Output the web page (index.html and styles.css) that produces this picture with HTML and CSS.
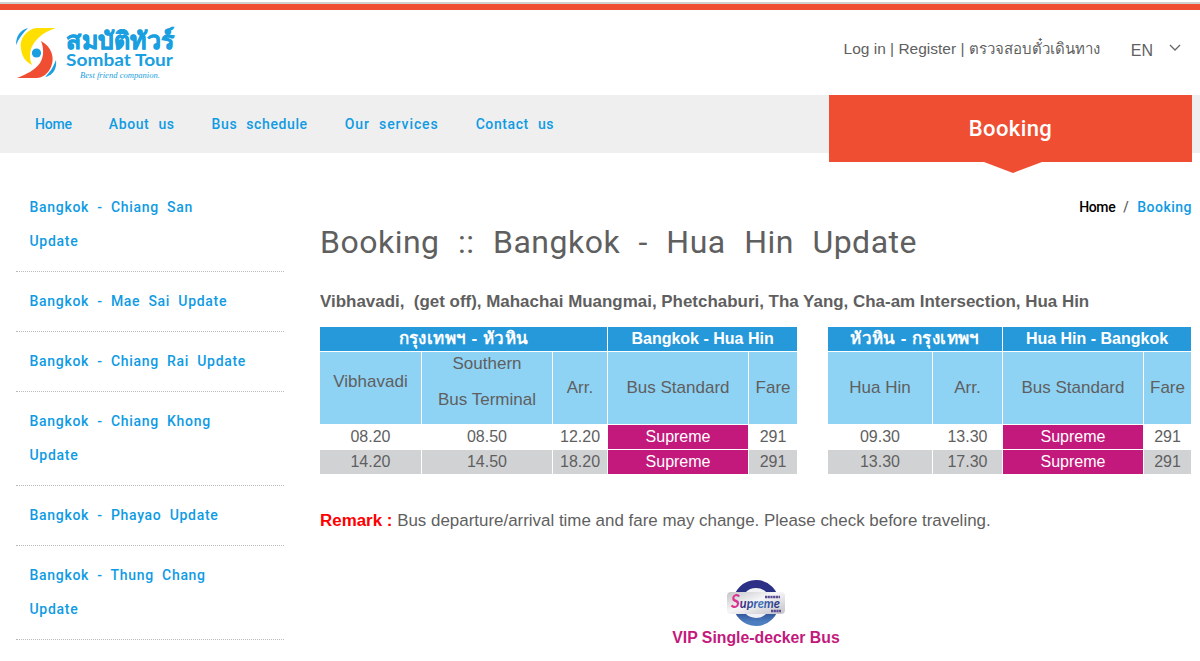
FILE: index.html
```
<!DOCTYPE html>
<html lang="en">

<head>
    <meta charset="UTF-8">
    <meta name="viewport" content="width=device-width, initial-scale=1.0">
    <title>Booking :: Bangkok - Hua Hin Update</title>
    <link rel="stylesheet" href="styles.css">
</head>

<body>

    <header class="header">
        <a class="logo" href="#">
            <svg width="164" height="58" viewBox="0 0 164 58">
                <path d="M1 18 C1 9 5 3 13 1 C8 6 4 11 1 18Z" fill="#1a9fe0" />
                <path d="M41 1 H21 C11 3 4 12 6 22 C7 30 11 35 17 38 C14 31 14 23 19 16 C24 9 31 4 41 1Z" fill="#ffdf00" />
                <path d="M26 14 C37 20 40 31 36 40 C33 47 27 51 22 51 H2 C12 47 20 43 25 36 C29 30 29 21 26 14Z" fill="#f04e33" />
                <path d="M41 33 C42 41 39 48 30 50 C35 45 38 41 41 33Z" fill="#1a9fe0" />
                <circle cx="21.500" cy="26" r="4.600" fill="#1a9fe0" />
                <text class="logo-thai" x="51" y="22" textLength="108" lengthAdjust="spacingAndGlyphs">สมบัติทัวร์</text>
                <text class="logo-name" x="51" y="39" textLength="107" lengthAdjust="spacingAndGlyphs">Sombat Tour</text>
                <text class="logo-slogan" x="65" y="51" textLength="80" lengthAdjust="spacingAndGlyphs">Best friend companion.</text>
            </svg>
        </a>
        <div class="account">
            <a href="#">Log in</a> | <a href="#">Register</a> | <a class="check" href="#">ตรวจสอบตั๋วเดินทาง</a>
        </div>
        <div class="lang">
            <span>EN</span>
            <svg width="12" height="8" viewBox="0 0 12 8">
                <path d="M1 1 L6 6 L11 1" fill="none" stroke="#666" stroke-width="1.300" />
            </svg>
        </div>
    </header>

    <nav class="nav">
        <ul class="menu">
            <li class="home"><a href="#">Home</a></li>
            <li><a href="#">About us</a></li>
            <li><a href="#">Bus schedule</a></li>
            <li class="services"><a href="#">Our services</a></li>
            <li><a href="#">Contact us</a></li>
        </ul>
        <a class="booking-tab" href="#">Booking</a>
    </nav>

    <div class="page">
        <aside class="sidebar">
            <a href="#">Bangkok - Chiang San<br>Update</a>
            <a href="#">Bangkok - Mae Sai Update</a>
            <a href="#">Bangkok - Chiang Rai Update</a>
            <a href="#">Bangkok - Chiang Khong<br>Update</a>
            <a href="#">Bangkok - Phayao Update</a>
            <a href="#">Bangkok - Thung Chang<br>Update</a>
        </aside>

        <main class="content">
            <div class="breadcrumb"><a class="home" href="#">Home</a> / <a href="#">Booking</a></div>
            <h1>Booking :: Bangkok - Hua Hin Update</h1>
            <p class="route">Vibhavadi,&nbsp; (get off), Mahachai Muangmai, Phetchaburi, Tha Yang, Cha-am Intersection, Hua Hin</p>

            <div class="tables">
                <table class="outbound">
                    <colgroup>
                        <col class="w101"><col class="w130"><col class="w54"><col class="w140"><col class="w48">
                    </colgroup>
                    <tr class="title">
                        <th class="thai" colspan="3">กรุงเทพฯ - หัวหิน</th>
                        <th colspan="2">Bangkok - Hua Hin</th>
                    </tr>
                    <tr class="sub">
                        <td class="raised">Vibhavadi</td>
                        <td class="station">Southern<br>Bus Terminal</td>
                        <td>Arr.</td>
                        <td>Bus Standard</td>
                        <td>Fare</td>
                    </tr>
                    <tr>
                        <td>08.20</td>
                        <td>08.50</td>
                        <td>12.20</td>
                        <td class="supreme">Supreme</td>
                        <td>291</td>
                    </tr>
                    <tr class="alt">
                        <td>14.20</td>
                        <td>14.50</td>
                        <td>18.20</td>
                        <td class="supreme">Supreme</td>
                        <td>291</td>
                    </tr>
                </table>

                <table class="inbound">
                    <colgroup>
                        <col class="w104"><col class="w69"><col class="w140"><col class="w47">
                    </colgroup>
                    <tr class="title">
                        <th class="thai" colspan="2">หัวหิน - กรุงเทพฯ</th>
                        <th colspan="2">Hua Hin - Bangkok</th>
                    </tr>
                    <tr class="sub">
                        <td>Hua Hin</td>
                        <td>Arr.</td>
                        <td>Bus Standard</td>
                        <td>Fare</td>
                    </tr>
                    <tr>
                        <td>09.30</td>
                        <td>13.30</td>
                        <td class="supreme">Supreme</td>
                        <td>291</td>
                    </tr>
                    <tr class="alt">
                        <td>13.30</td>
                        <td>17.30</td>
                        <td class="supreme">Supreme</td>
                        <td>291</td>
                    </tr>
                </table>
            </div>

            <p class="remark"><strong>Remark :</strong> Bus departure/arrival time and fare may change. Please check before traveling.</p>

            <div class="bus">
                <svg width="60" height="48" viewBox="0 0 60 48">
                    <defs>
                        <linearGradient id="ring" x1="0" y1="0" x2="0" y2="1">
                            <stop offset="0" stop-color="#2d2f86" />
                            <stop offset="0.600" stop-color="#20367f" />
                            <stop offset="1" stop-color="#4d7fc0" />
                        </linearGradient>
                        <linearGradient id="plate" x1="0" y1="0" x2="1" y2="1">
                            <stop offset="0" stop-color="#c4c4c9" />
                            <stop offset="0.450" stop-color="#f6f6f8" />
                            <stop offset="1" stop-color="#c2c2c8" />
                        </linearGradient>
                        <linearGradient id="word" x1="0" y1="0" x2="1" y2="0">
                            <stop offset="0" stop-color="#e6358f" />
                            <stop offset="0.180" stop-color="#d0338f" />
                            <stop offset="0.240" stop-color="#34257c" />
                            <stop offset="0.600" stop-color="#3f73bb" />
                            <stop offset="1" stop-color="#2c2b75" />
                        </linearGradient>
                    </defs>
                    <circle cx="30" cy="23" r="19" fill="#f2f2f6" stroke="url(#ring)" stroke-width="8" />
                    <rect x="1" y="12" width="58" height="22" rx="4" fill="url(#plate)" />
                    <text class="badge-word" x="5" y="28" textLength="49" lengthAdjust="spacingAndGlyphs" fill="url(#word)"><tspan class="big">S</tspan>upreme</text>
                    <path d="M39 17 H54 M45 31 H55" stroke="#5a4a92" stroke-width="2.500" stroke-dasharray="2.200 0.500" />
                </svg>
                <span>VIP Single-decker Bus</span>
            </div>
        </main>
    </div>

</body>

</html>
```
FILE: styles.css
```
* {
    box-sizing: border-box;
}

body {
    margin: 0;
    height: 661px;
    overflow: hidden;
    background-color: #fff;
    color: #5f5f5f;
    font-family: "Liberation Sans", Arial, sans-serif;
    font-size: 16px;
    padding-top: 2px;
}

a {
    color: inherit;
    text-decoration: none;
}

.header {
    height: 93px;
    border-top: 2px solid #d0d0d0;
    display: flex;
    align-items: flex-start;
    padding: 0 19px 0 15px;
    background: linear-gradient(#f04e33 5.500px, #fff 6px);
}

.logo {
    margin-top: 23px;
}

.logo svg {
    display: block;
    overflow: visible;
}

.logo text {
    fill: #1a9fe0;
}

.logo .logo-thai {
    font-size: 24px;
    font-weight: bold;
    stroke: #1a9fe0;
    stroke-width: 0.600px;
}

.logo .logo-name {
    font-family: Lato, sans-serif;
    font-size: 17px;
    font-weight: bold;
}

.logo .logo-slogan {
    font-family: "Liberation Serif", serif;
    font-size: 9px;
    font-style: italic;
}

.account {
    margin: 36px 31px 0 auto;
    font-size: 15.500px;
    line-height: 18px;
    white-space: nowrap;
}

.account .check {
    font-size: 15px;
}

.lang {
    display: flex;
    gap: 16px;
    margin-top: 38px;
    line-height: 18px;
}

.lang svg {
    margin-top: 2px;
}

.nav {
    height: 58px;
    background-color: #efefef;
    display: flex;
    justify-content: space-between;
    align-items: flex-start;
    padding: 0 8px 0 35px;
    font-family: Roboto, sans-serif;
}

.menu {
    display: flex;
    gap: 37px;
    margin: 0;
    padding: 0;
    list-style: none;
    font-size: 14px;
    font-weight: 500;
    line-height: 58px;
    letter-spacing: 0.600px;
    word-spacing: 5px;
    color: #0f9be3;
}

.menu .home {
    letter-spacing: -0.200px;
}

.menu .services {
    letter-spacing: 0.900px;
}

.booking-tab {
    position: relative;
    width: 363px;
    height: 67px;
    background-color: #f04e33;
    color: #fff;
    font-size: 22px;
    font-weight: 500;
    line-height: 67px;
    letter-spacing: 0.400px;
    text-align: center;
}

.booking-tab::after {
    content: "";
    position: absolute;
    top: 100%;
    left: 155px;
    border: solid transparent;
    border-width: 11px 29px 0;
    border-top-color: #f04e33;
}

.page {
    display: flex;
    gap: 36px;
    padding: 24.600px 8px 0 16px;
}

.sidebar {
    width: 268px;
    flex: none;
    font-family: Roboto, sans-serif;
    font-size: 14px;
    font-weight: 500;
    line-height: 34.600px;
    letter-spacing: 0.700px;
    word-spacing: 4px;
    color: #0f9be3;
}

.sidebar a {
    display: block;
    padding: 12.100px 13.500px;
    border-bottom: 1px dotted #bbb;
}

.content {
    width: 872px;
}

.breadcrumb {
    margin-top: 19px;
    text-align: right;
    font-family: Roboto, sans-serif;
    font-size: 14px;
    font-weight: 500;
    line-height: 20px;
    letter-spacing: 0.500px;
    word-spacing: 4px;
}

.breadcrumb a {
    color: #0f9be3;
}

.breadcrumb .home {
    color: #000;
    letter-spacing: -0.400px;
}

h1 {
    margin: 5px 0 0;
    font-family: Roboto, sans-serif;
    font-size: 32px;
    font-weight: normal;
    line-height: 40px;
    letter-spacing: 0.500px;
    word-spacing: 10px;
    white-space: nowrap;
}

.route {
    margin: 30px 0 0;
    font-size: 16.950px;
    font-weight: bold;
    line-height: 20px;
    white-space: nowrap;
}

.tables {
    display: flex;
    justify-content: space-between;
    margin-top: 15px;
}

table {
    table-layout: fixed;
    border-collapse: separate;
    border-spacing: 1px;
    margin: -1px;
    text-align: center;
}

.outbound {
    width: 479px;
}

.inbound {
    width: 365px;
    margin-right: 0;
}

.w47 {
    width: 47px;
}

.w48 {
    width: 48px;
}

.w54 {
    width: 54px;
}

.w69 {
    width: 69px;
}

.w101 {
    width: 101px;
}

.w104 {
    width: 104px;
}

.w130 {
    width: 130px;
}

.w140 {
    width: 140px;
}

th,
td {
    height: 24px;
    padding: 0;
    line-height: 22px;
}

.title th {
    background-color: #2699db;
    color: #fff;
}

.title .thai {
    font-size: 17px;
    letter-spacing: 0.400px;
}

.sub td {
    height: 72px;
    background-color: #8ed2f4;
    font-size: 17px;
}

.sub .raised {
    padding-bottom: 12px;
}

.sub .station {
    line-height: 36px;
    vertical-align: top;
}

.station::before {
    content: "";
    display: block;
    margin-top: -6px;
}

.alt td {
    background-color: #d1d2d4;
}

td.supreme {
    background-color: #c3197d;
    color: #fff;
}

.remark {
    margin: 37px 0 0;
    font-size: 16.930px;
    line-height: 20px;
}

.remark strong {
    color: #f00;
}

.bus {
    display: flex;
    flex-direction: column;
    align-items: center;
    margin-top: 49px;
    color: #c3197d;
    font-size: 15.800px;
    font-weight: bold;
    line-height: 20px;
}

.badge-word {
    font-family: Lato, sans-serif;
    font-size: 14px;
    font-style: italic;
    font-weight: bold;
}

.badge-word .big {
    font-size: 19px;
}
```
